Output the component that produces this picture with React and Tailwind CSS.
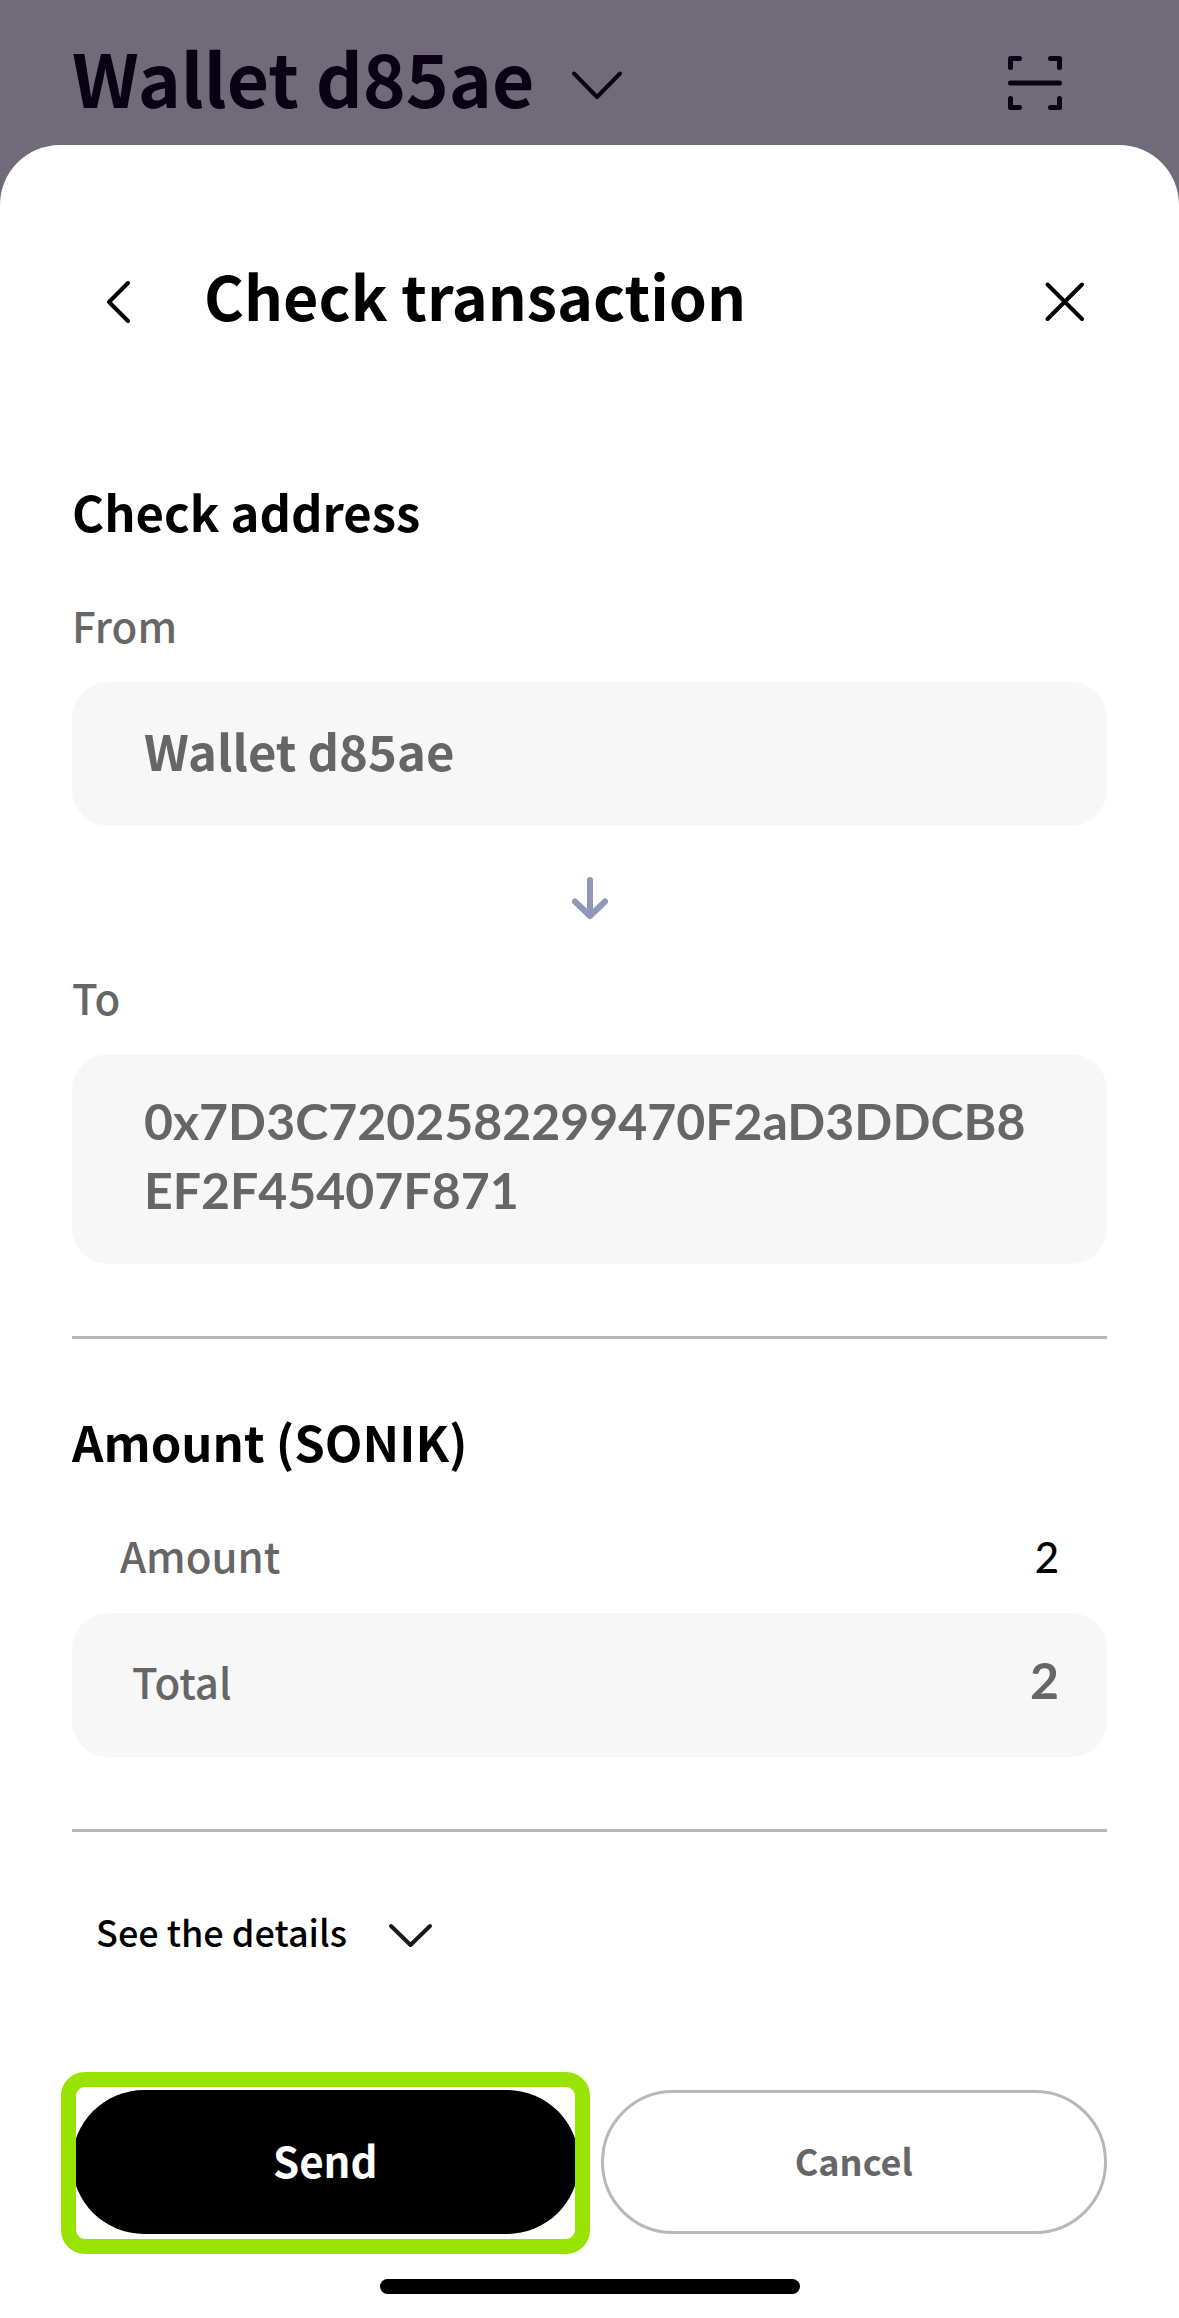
import React from "react";

const CJK = "font-['Noto_Sans_CJK_JP','Noto_Sans',sans-serif]";
const LATO = "font-['Lato',sans-serif]";

function Stroke({ children, className, viewBox, width = 4 }) {
  return (
    <svg
      aria-hidden="true"
      className={className}
      viewBox={viewBox}
      fill="none"
      stroke="currentColor"
      strokeWidth={width}
      strokeLinecap="round"
      strokeLinejoin="round"
    >
      {children}
    </svg>
  );
}

function Field({ id, label, lato, children }) {
  return (
    <div className="flex flex-col gap-[27px]">
      <span id={id} className="text-[42px] leading-[60px] font-medium text-[#666666]">
        {label}
      </span>
      <div
        role="group"
        aria-labelledby={id}
        className="min-h-[144px] rounded-[36px] bg-[#f7f7f7] px-[72px] pt-[33px] pb-[39px] font-bold leading-[69px] text-[#666666]"
      >
        {lato ? (
          <p className={`${LATO} text-[50px] break-all`}>{children}</p>
        ) : (
          <p className="text-[49px]">{children}</p>
        )}
      </div>
    </div>
  );
}

export default function App() {
  return (
    <div className={`${CJK} flex min-h-screen flex-col bg-[#706b79] text-black`}>
      <header className="flex h-[145px] items-start justify-between pt-10 pr-[108px] pl-[72px] text-[#0a0212]">
        <button type="button" className="flex items-center gap-9">
          <span className="text-[73px] leading-[72px] font-bold">Wallet d85ae</span>
          <Stroke className="h-[72px] w-[54px]" viewBox="0 0 54 72">
            <path d="M4 33.500L27 57L50 33.500" />
          </Stroke>
        </button>
        <button type="button" aria-label="Scan code">
          <Stroke className="h-[72px] w-[72px]" viewBox="0 0 72 72" width={5}>
            <path d="M11.5 27.500V18.500H20.500M51.500 18.500H60.500V27.500M60.500 58.500V67.500H51.500M20.500 67.500H11.500V58.500M11.500 43H60.500" />
          </Stroke>
        </button>
      </header>

      <main className="flex grow flex-col rounded-t-[60px] bg-white px-[72px] pt-[114px] pb-6">
        <div className="flex items-center justify-between">
          <div className="flex items-center gap-9">
            <button type="button" aria-label="Back" className="pl-6">
              <Stroke className="h-[72px] w-[72px]" viewBox="0 0 72 72">
                <path d="M32 24L13 43L32 62" />
              </Stroke>
            </button>
            <h1 className="text-[61px] leading-[72px] font-bold">Check transaction</h1>
          </div>
          <button type="button" aria-label="Close" className="pr-1.5">
            <Stroke className="h-[72px] w-[72px]" viewBox="0 0 72 72">
              <path d="M18.500 25.500L53 60M53 25.500L18.500 60" />
            </Stroke>
          </button>
        </div>

        <section className="mt-36">
          <h2 className="mb-12 text-[49px] leading-[72px] font-bold">Check address</h2>
          <Field id="from" label="From">Wallet d85ae</Field>
          <Stroke className="mx-auto mt-12 mb-[45px] h-12 w-12 text-[#9097b8]" viewBox="0 0 48 48" width={6}>
            <path d="M24 6V42M9 27.500L24 42L39 27.500" />
          </Stroke>
          <Field id="to" label="To" lato>
            0x7D3C7202582299470F2aD3DDCB8EF2F45407F871
          </Field>
        </section>

        <section className="mt-[72px] border-t-[3px] border-[#b8b8b8] pt-[66px]">
          <h2 className="text-[49px] leading-[72px] font-bold">Amount (SONIK)</h2>
          <dl>
            <div className="mt-12 flex items-baseline justify-between px-12 text-[42px] leading-[60px] font-medium">
              <dt className="text-[#666666]">Amount</dt>
              <dd className={LATO}>2</dd>
            </div>
            <div className="mt-[26px] flex min-h-[144px] items-baseline justify-between rounded-[36px] bg-[#f7f7f7] pt-[33px] pr-12 pl-[60px] leading-[69px] text-[#666666]">
              <dt className="text-[42px] font-medium">Total</dt>
              <dd className={`${LATO} text-[50px] font-bold`}>2</dd>
            </div>
          </dl>
        </section>

        <section className="mt-[72px] border-t-[3px] border-[#b8b8b8] pt-[69px]">
          <button type="button" className="flex items-center gap-10 pl-6 text-[36px] leading-[60px] font-medium">
            See the details
            <Stroke className="h-[60px] w-[48px] text-[#1b1920]" viewBox="0 0 48 60">
              <path d="M4 25L23.500 44L43 25" />
            </Stroke>
          </button>
        </section>

        <div className="mt-[129px] grid grid-cols-2 gap-[22px]">
          <div className="relative">
            <button
              type="button"
              className="h-36 w-full rounded-full bg-black pb-1 text-[42px] leading-[60px] font-bold text-white"
            >
              Send
            </button>
            <div className="pointer-events-none absolute -inset-x-[11px] -top-[18px] -bottom-5 rounded-3xl border-[15px] border-[#99e300]" />
          </div>
          <button
            type="button"
            className="h-36 w-full rounded-full border-[3px] border-[#b8b8b8] pb-1 text-[36px] leading-[60px] font-bold text-[#666666]"
          >
            Cancel
          </button>
        </div>

        <div className="mx-auto mt-[45px] h-[15px] w-[420px] rounded-full bg-black" />
      </main>
    </div>
  );
}
